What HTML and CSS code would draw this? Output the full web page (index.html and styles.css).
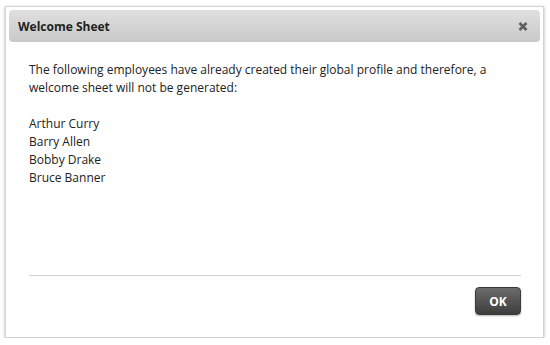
FILE: index.html
```html
<!DOCTYPE html>
<html lang="en">
<head>
<meta charset="UTF-8">
<title>Welcome Sheet</title>
<link rel="stylesheet" href="styles.css">
</head>
<body>
<div class="dialog">
  <div class="dialog-header">
    <span class="dialog-title">Welcome Sheet</span>
    <span class="dialog-close">
      <svg width="10" height="9" viewBox="0 0 10 9"><path d="M1.5 1 L8.5 8 M8.5 1 L1.5 8" stroke="#5e5e5e" stroke-width="2.6" stroke-linecap="butt"/></svg>
    </span>
  </div>
  <div class="dialog-body">
    <p>The following employees have already created their global profile and therefore, a welcome sheet will not be generated:</p>
    <p>Arthur Curry<br>Barry Allen<br>Bobby Drake<br>Bruce Banner</p>
  </div>
  <div class="dialog-footer">
    <button class="btn-ok">OK</button>
  </div>
</div>
</body>
</html>
```
FILE: styles.css
```css
body {
  margin: 0;
  padding: 0;
  background: #fff;
  font-family: "Open Sans", Arial, sans-serif;
}

.dialog {
  width: 537px;
  height: 330px;
  margin: 6px 0 0 5px;
  border: 1px solid #d4d4d4;
  box-shadow: 0 1px 3px rgba(0, 0, 0, 0.3);
  background: #fff;
  display: flex;
  flex-direction: column;
}

.dialog-header {
  height: 32px;
  margin: 3px 3px 0 3px;
  padding: 0 12px 0 9px;
  border-radius: 4px;
  background: linear-gradient(to bottom, #dfdfdf, #c9c9c9);
  display: flex;
  align-items: center;
  justify-content: space-between;
}

.dialog-title {
  font-size: 12px;
  font-weight: bold;
  color: #222;
}

.dialog-close {
  display: flex;
  cursor: pointer;
}

.dialog-body {
  flex: 1;
  padding: 19px 23px 0 23px;
  font-size: 12px;
  line-height: 18px;
  color: #222;
}

.dialog-body p {
  margin: 0 0 18px 0;
}

.dialog-footer {
  margin: 0 22px 0 23px;
  padding: 11px 0 22px 0;
  border-top: 1px solid #cfcfcf;
  display: flex;
  justify-content: flex-end;
}

.btn-ok {
  width: 46px;
  height: 28px;
  border: 1px solid #3a3a3a;
  border-radius: 4px;
  background: linear-gradient(to bottom, #6b6b6b, #3d3d3d);
  box-shadow: 0 1px 2px rgba(0, 0, 0, 0.3);
  color: #fff;
  font-family: "Open Sans", Arial, sans-serif;
  font-size: 12px;
  font-weight: bold;
  cursor: pointer;
}
```
